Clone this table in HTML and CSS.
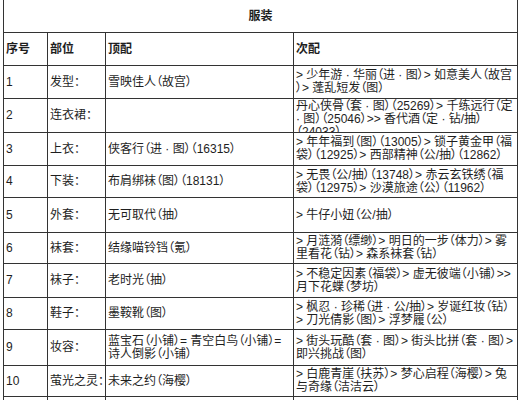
FILE: index.html
```html
<!DOCTYPE html>
<html lang="zh">
<head>
<meta charset="utf-8">
<title>服装</title>
<link rel="stylesheet" href="styles.css">
</head>
<body>
<div class="table">
  <div class="cell title">服装</div>

  <div class="cell head">序号</div>
  <div class="cell head">部位</div>
  <div class="cell head">顶配</div>
  <div class="cell head">次配</div>

  <div class="cell">1</div>
  <div class="cell">发型：</div>
  <div class="cell">雪映佳人（故宫）</div>
  <div class="cell">&gt; 少年游 · 华丽（进 · 图）&gt; 如意美人（故宫<br>）&gt; 蓬乱短发（图）</div>

  <div class="cell">2</div>
  <div class="cell">连衣裙：</div>
  <div class="cell"></div>
  <div class="cell top">丹心侠骨（套 · 图）（25269）&gt; 千练远行（定<br>· 图）（25046）&gt;&gt; 香代酒（定 · 钻/抽）<br>（24033）</div>

  <div class="cell">3</div>
  <div class="cell">上衣：</div>
  <div class="cell">侠客行（进 · 图）（16315）</div>
  <div class="cell">&gt; 年年福到（图）（13005）&gt; 锁子黄金甲（福<br>袋）（12925）&gt; 西部精神（公/抽）（12862）</div>

  <div class="cell">4</div>
  <div class="cell">下装：</div>
  <div class="cell">布肩绑袜（图）（18131）</div>
  <div class="cell">&gt; 无畏（公/抽）（13748）&gt; 赤云玄铁绣（福<br>袋）（12975）&gt; 沙漠旅途（公）（11962）</div>

  <div class="cell">5</div>
  <div class="cell">外套：</div>
  <div class="cell">无可取代（抽）</div>
  <div class="cell">&gt; 牛仔小妞（公/抽）</div>

  <div class="cell">6</div>
  <div class="cell">袜套：</div>
  <div class="cell">结缘喵铃铛（氪）</div>
  <div class="cell">&gt; 月涟漪（缥缈）&gt; 明日的一步（体力）&gt; 雾<br>里看花（钻）&gt; 森系袜套（钻）</div>

  <div class="cell">7</div>
  <div class="cell">袜子：</div>
  <div class="cell">老时光（抽）</div>
  <div class="cell">&gt; 不稳定因素（福袋）&gt; 虚无彼端（小铺）&gt;&gt;<br>月下花蝶（梦坊）</div>

  <div class="cell">8</div>
  <div class="cell">鞋子：</div>
  <div class="cell">墨鞍靴（图）</div>
  <div class="cell">&gt; 枫忍 · 珍稀（进 · 公/抽）&gt; 岁诞红妆（钻）<br>&gt; 刀光倩影（图）&gt; 浮梦履（公）</div>

  <div class="cell">9</div>
  <div class="cell">妆容：</div>
  <div class="cell">蓝宝石（小铺）= 青空白鸟（小铺）=<br>诗人倒影（小铺）</div>
  <div class="cell">&gt; 街头玩酷（套 · 图）&gt; 街头比拼（套 · 图）&gt;<br>即兴挑战（图）</div>

  <div class="cell">10</div>
  <div class="cell">萤光之灵：</div>
  <div class="cell">未来之约（海樱）</div>
  <div class="cell">&gt; 白鹿青崖（扶苏）&gt; 梦心启程（海樱）&gt; 兔<br>与奇缘（洁洁云）</div>

  <div class="cell"></div>
  <div class="cell"></div>
  <div class="cell"></div>
  <div class="cell"></div>
</div>
</body>
</html>
```

FILE: styles.css
```css
html, body {
  margin: 0;
  padding: 0;
  background: #fff;
  overflow: hidden;
}

body {
  font-family: "Liberation Sans", "Noto Sans CJK SC", sans-serif;
  font-size: 12px;
  line-height: 13px;
  color: #1e1e1e;
  font-feature-settings: "palt";
}

.table {
  display: grid;
  grid-template-columns: 43px 57px 187px 223px;
  grid-template-rows: 32px 32px 32px 33px 32px 31px 34px 30px 33px 31px 35px 30px 30px;
  gap: 1px;
  padding: 1px;
  background: #333;
  width: max-content;
  margin: -1px 0 0 3px;
}

.cell {
  background: #fff;
  display: flex;
  flex-direction: column;
  justify-content: center;
  padding: 0 2px;
  overflow: hidden;
  white-space: nowrap;
}

.cell.top {
  justify-content: flex-start;
  padding-top: 1px;
}

.title {
  grid-column: 1 / -1;
  align-items: center;
  font-weight: bold;
}

.head {
  font-weight: bold;
}
```
